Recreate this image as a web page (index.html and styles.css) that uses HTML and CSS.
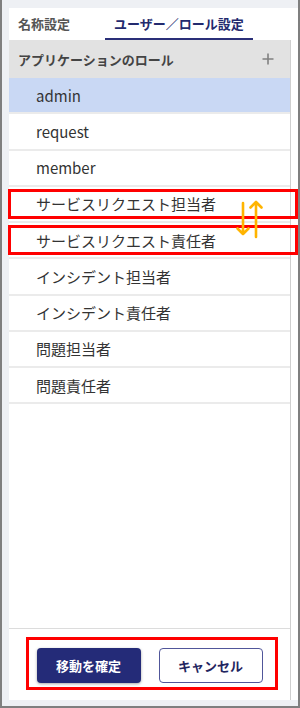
FILE: index.html
```html
<!DOCTYPE html>
<html lang="ja">
<head>
    <meta charset="UTF-8">
    <meta name="viewport" content="width=device-width, initial-scale=1.0">
    <title>ロール設定</title>
    <link rel="stylesheet" href="styles.css">
</head>
<body>
    <div class="frame">
        <div class="panel">
            <div class="tabs">
                <div class="tab">名称設定</div>
                <div class="tab tab-active">ユーザー／ロール設定</div>
            </div>

            <div class="role-list">
                <div class="list-header">
                    <span>アプリケーションのロール</span>
                    <svg class="add-icon" width="12" height="12" viewBox="0 0 12 12">
                        <path d="M6 0.5V11.5M0.5 6H11.5" stroke="#808080" stroke-width="1.6" fill="none"/>
                    </svg>
                </div>
                <div class="role-item selected">admin</div>
                <div class="role-item">request</div>
                <div class="role-item">member</div>
                <div class="role-item">サービスリクエスト担当者</div>
                <div class="role-item">サービスリクエスト責任者</div>
                <div class="role-item">インシデント担当者</div>
                <div class="role-item">インシデント責任者</div>
                <div class="role-item">問題担当者</div>
                <div class="role-item">問題責任者</div>
                <div class="list-spacer"></div>
                <div class="list-footer">
                    <button class="btn btn-primary">移動を確定</button>
                    <button class="btn btn-outline">キャンセル</button>
                </div>
            </div>
        </div>

        <!-- annotation marks -->
        <div class="mark mark-row1"></div>
        <div class="mark mark-row2"></div>
        <div class="mark mark-footer"></div>
        <svg class="swap-arrows" width="36" height="46" viewBox="0 0 36 46">
            <g stroke="#ffb400" stroke-width="2.6" fill="none" stroke-linecap="round" stroke-linejoin="round">
                <path d="M11 7V38M5.5 32.5L11 38L16.5 32.5"/>
                <path d="M24 41V6M18.5 11.5L24 6L29.5 11.5"/>
            </g>
        </svg>
    </div>
</body>
</html>
```

FILE: styles.css
```css
body {
    margin: 0;
    font-family: "Noto Sans CJK JP", "Noto Sans", sans-serif;
    color: #333;
}

.frame {
    position: relative;
    width: 300px;
    height: 708px;
    box-sizing: border-box;
    padding: 8px 0 6px 7px;
    background: #eef0f4;
    border: 2px solid #7f7f7f;
    border-top: none;
}

.panel {
    height: 100%;
    background: white;
    display: flex;
    flex-direction: column;
}

.tabs {
    display: flex;
    gap: 26px;
    height: 32px;
    flex-shrink: 0;
}

.tab {
    display: flex;
    align-items: center;
    padding: 0 9px;
    font-size: 13px;
    font-weight: bold;
    color: #555;
    box-sizing: border-box;
    border-bottom: 2px solid transparent;
}

.tab-active {
    color: #232a6e;
    border-bottom-color: #2a2f78;
}

.role-list {
    flex: 1;
    width: 282px;
    display: flex;
    flex-direction: column;
    border-right: 1px solid #cfcfcf;
    box-sizing: border-box;
}

.list-header {
    height: 38px;
    flex-shrink: 0;
    display: flex;
    align-items: center;
    justify-content: space-between;
    padding: 0 16px 0 9px;
    background: #e2e2e2;
    font-size: 13px;
    font-weight: bold;
    color: #444;
}

.add-icon {
    margin-top: -1px;
}

.role-item {
    height: 34.25px;
    flex-shrink: 0;
    display: flex;
    align-items: center;
    padding-left: 27px;
    font-size: 15px;
    color: #333;
    border-bottom: 2px solid #ebebeb;
}

.role-item.selected {
    background: #c9d8f4;
}

.list-spacer {
    flex: 1;
}

.list-footer {
    height: 70px;
    flex-shrink: 0;
    display: flex;
    align-items: center;
    justify-content: center;
    gap: 18px;
    border-top: 1px solid #dcdcdc;
    padding-top: 1px;
}

.btn {
    width: 104px;
    height: 35px;
    border-radius: 4px;
    font-family: inherit;
    font-size: 13px;
    font-weight: bold;
    cursor: pointer;
}

.btn-primary {
    background: #242b78;
    color: white;
    border: none;
    box-shadow: 0 1px 3px rgba(0,0,0,0.35);
}

.btn-outline {
    background: white;
    color: #1f2560;
    border: 1.5px solid #50569a;
}

.mark {
    position: absolute;
    box-sizing: border-box;
    border: 3px solid #ff0000;
}

.mark-row1 {
    left: 6px;
    top: 189px;
    width: 290px;
    height: 30px;
}

.mark-row2 {
    left: 6px;
    top: 225px;
    width: 290px;
    height: 30px;
}

.mark-footer {
    left: 24px;
    top: 637px;
    width: 252px;
    height: 53px;
}

.swap-arrows {
    position: absolute;
    left: 230px;
    top: 196px;
}
```
